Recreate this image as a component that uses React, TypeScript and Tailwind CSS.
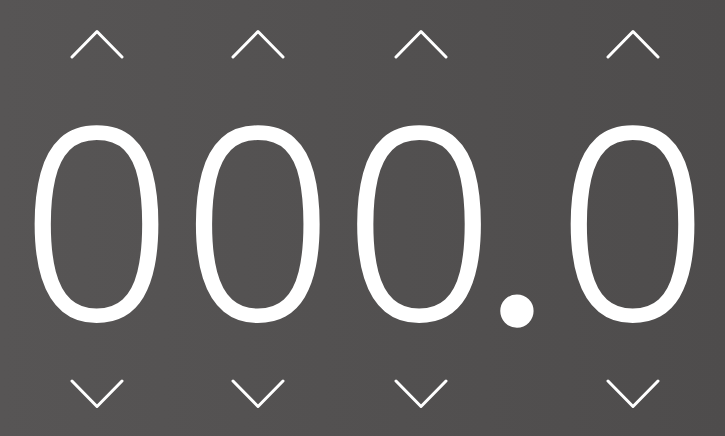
import React from "react";

function ChevronUp() {
  return (
    <svg width="54" height="30" viewBox="0 0 54 30" className="block">
      <polyline points="2,28 27,2.5 52,28" fill="none" stroke="#ffffff" strokeWidth="3" strokeLinecap="round" strokeLinejoin="round" />
    </svg>
  );
}

function ChevronDown() {
  return (
    <svg width="54" height="30" viewBox="0 0 54 30" className="block">
      <polyline points="2,2 27,27.5 52,2" fill="none" stroke="#ffffff" strokeWidth="3" strokeLinecap="round" strokeLinejoin="round" />
    </svg>
  );
}

function Digit({ value, tight }: { value: string; tight?: boolean }) {
  return (
    <div className={tight ? "flex flex-col items-center pl-[5px]" : "flex flex-col items-center px-[5px]"}>
      <div className={tight ? "mt-[29px] ml-[19px]" : "mt-[29px]"}>
        <ChevronUp />
      </div>
      <span
        className={
          tight
            ? "mt-[25px] block h-[265px] leading-none text-[265px] font-light tracking-[-15px] text-white [-webkit-text-stroke:3px_#ffffff]"
            : "mt-[25px] block h-[265px] leading-none text-[265px] font-light text-white [-webkit-text-stroke:3px_#ffffff]"
        }
      >
        {value}
      </span>
      <div className={tight ? "mt-[30px] ml-[19px]" : "mt-[30px]"}>
        <ChevronDown />
      </div>
    </div>
  );
}

export default function App() {
  return (
    <div
      className="flex h-[436px] w-[725px] items-start overflow-hidden bg-gradient-to-r from-[#575555] to-[#4e4c4c] pl-[16px]"
      style={{ fontFamily: '"Open Sans", "Noto Sans", sans-serif' }}
    >
      <Digit value="0" />
      <Digit value="0" />
      <Digit value="0" tight />
      <div className="ml-[4px] mr-[2px] pt-[101px]">
        <span className="block h-[265px] leading-none text-[265px] font-normal text-white [font-family:'Liberation_Serif',serif] [-webkit-text-stroke:2px_#ffffff]">.</span>
      </div>
      <Digit value="0" />
    </div>
  );
}
